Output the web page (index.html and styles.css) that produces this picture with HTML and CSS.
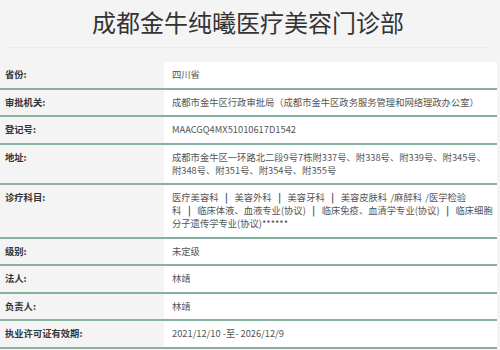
FILE: index.html
```html
<!DOCTYPE html>
<html lang="zh">
<head>
<meta charset="utf-8">
<link rel="stylesheet" href="styles.css">
</head>
<body>
<div class="page">
  <header class="head">
    <h1 class="title">成都金牛纯曦医疗美容门诊部</h1>
  </header>
  <div class="table">
    <div class="row"><div class="label">省份:</div><div class="value">四川省</div></div>
    <div class="row"><div class="label">审批机关:</div><div class="value">成都市金牛区行政审批局（成都市金牛区政务服务管理和网络理政办公室）</div></div>
    <div class="row"><div class="label">登记号:</div><div class="value">MAACGQ4MX51010617D1542</div></div>
    <div class="row"><div class="label">地址:</div><div class="value">成都市金牛区一环路北二段9号7栋附337号、附338号、附339号、附345号、附348号、附351号、附354号、附355号</div></div>
    <div class="row"><div class="label">诊疗科目:</div><div class="value subjects">医疗美容<span class="nw">科&nbsp;&nbsp;<b class="bar">|</b>&nbsp;&nbsp;美</span>容外<span class="nw">科&nbsp;&nbsp;<b class="bar">|</b>&nbsp;&nbsp;美</span>容牙<span class="nw">科&nbsp;&nbsp;<b class="bar">|</b>&nbsp;&nbsp;美</span>容皮肤科 /麻醉科 /医学检验<span class="nw">科&nbsp;&nbsp;<b class="bar">|</b>&nbsp;&nbsp;临</span>床体液、血液专业(协议<span class="nw">)&nbsp;&nbsp;<b class="bar">|</b>&nbsp;&nbsp;临</span>床免疫、血清学专业(协议<span class="nw">)&nbsp;&nbsp;<b class="bar">|</b>&nbsp;&nbsp;临</span>床细胞分子遗传学专业(协议)******</div></div>
    <div class="row"><div class="label">级别:</div><div class="value">未定级</div></div>
    <div class="row"><div class="label">法人:</div><div class="value">林靖</div></div>
    <div class="row"><div class="label">负责人:</div><div class="value">林靖</div></div>
    <div class="row"><div class="label">执业许可证有效期:</div><div class="value">2021/12/10 -至- 2026/12/9</div></div>
  </div>
</div>
</body>
</html>
```
FILE: styles.css
```css
html, body {
  margin: 0;
  padding: 0;
  background: #f4f4f4;
}
body {
  font-family: "Noto Sans CJK SC", "Noto Sans", sans-serif;
  color: #333;
}
.page {
  width: 500px;
  height: 350px;
  overflow: hidden;
}
.head {
  margin: 0 12px 0 8px;
  height: 47px;
  border-bottom: 1px solid #e9e9e9;
  display: flex;
  justify-content: center;
}
.title {
  margin: 6px 0 0 0;
  font-size: 24px;
  line-height: 32px;
  font-weight: normal;
  color: #333;
}
.table {
  margin: 14px 3px 0 0;
}
.row {
  display: grid;
  grid-template-columns: 164px 1fr;
  border-bottom: 2px solid #86b0a0;
}
.label {
  padding: 6px 0 6.5px 5px;
  font-size: 9.3px;
  line-height: 13px;
  font-weight: bold;
  color: #333;
}
.value {
  background: #fff;
  padding: 6px 3px 6.5px 8px;
  font-size: 9.3px;
  line-height: 13px;
  color: #555;
}
.subjects {
  word-spacing: 1.2px;
}
.nw {
  white-space: nowrap;
}
.bar {
  font-weight: bold;
  color: #3a4660;
}
```
